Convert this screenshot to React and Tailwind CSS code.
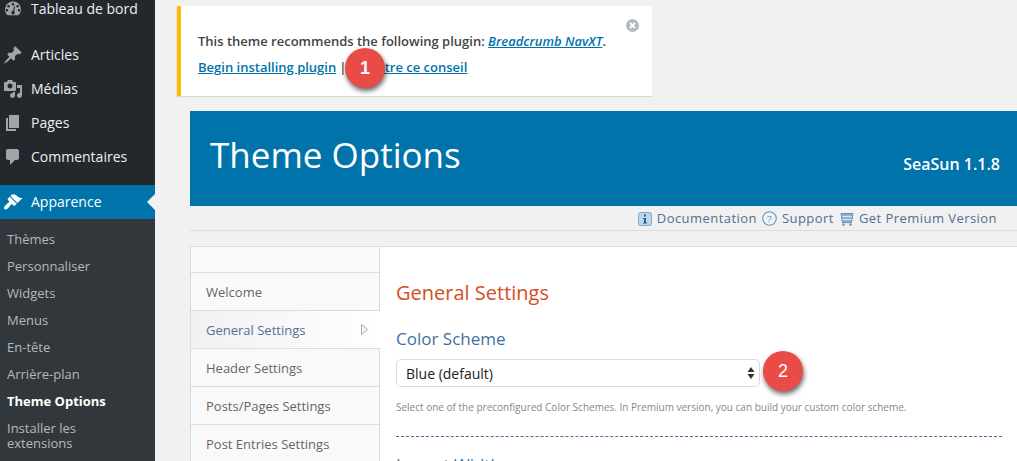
const font = { fontFamily: '"Open Sans", sans-serif' };

const Dash = () => (
  <svg viewBox="0 0 20 20" className="w-5 h-5" fill="#a0a5aa">
    <path fillRule="evenodd" d="M10 2.500a8 8 0 0 0-8 8c0 2 .8 3.900 2 5.300.3.300.7.500 1.100.500h9.800c.4 0 .8-.2 1.100-.5a8 8 0 0 0 2-5.300 8 8 0 0 0-8-8zM10 4a1.300 1.300 0 1 1 0 2.600A1.300 1.300 0 0 1 10 4zM5.500 6a1.300 1.300 0 1 1 0 2.600 1.300 1.300 0 0 1 0-2.600zm9 0a1.300 1.300 0 1 1 0 2.600 1.300 1.300 0 0 1 0-2.600zM4 10a1.300 1.300 0 1 1 0 2.600A1.300 1.300 0 0 1 4 10zm12 0a1.300 1.300 0 1 1 0 2.600 1.300 1.300 0 0 1 0-2.600zM11.500 7l.6.2-1 5a1.700 1.700 0 1 1-1.300-.3z" />
  </svg>
);
const Pin = () => (
  <svg viewBox="0 0 20 20" className="w-5 h-5" fill="#a0a5aa">
    <path d="M10.440 3.020l1.820-1.820 6.360 6.350-1.830 1.820c-1.050-.68-2.480-.57-3.410.36l-.75.750c-.92.930-1.040 2.350-.35 3.410l-1.830 1.820-2.410-2.410-2.800 2.790c-.42.420-3.380 2.710-3.800 2.290s1.860-3.390 2.280-3.810l2.790-2.790L4.100 9.360l1.830-1.820c1.050.690 2.480.570 3.400-.36l.750-.75c.930-.92 1.050-2.350.360-3.410z" />
  </svg>
);
const Media = () => (
  <svg viewBox="0 0 20 20" className="w-5 h-5" fill="#a0a5aa">
    <path fillRule="evenodd" d="M13 11V4c0-.55-.45-1-1-1h-1.670L9 1H5L3.670 3H2c-.55 0-1 .45-1 1v7c0 .55.45 1 1 1h10c.55 0 1-.45 1-1zM7 4.500c1.380 0 2.500 1.120 2.500 2.500S8.380 9.500 7 9.500 4.500 8.380 4.500 7 5.620 4.500 7 4.500zM14 6h5v10.500c0 1.380-1.120 2.500-2.500 2.500S14 17.880 14 16.500s1.120-2.500 2.500-2.500c.17 0 .34.020.5.050V9h-3V6zm-4 8.050V13h2v3.500c0 1.380-1.120 2.500-2.500 2.500S7 17.880 7 16.500 8.120 14 9.500 14c.17 0 .34.020.5.050z" />
  </svg>
);
const Pages = () => (
  <svg viewBox="0 0 20 20" className="w-5 h-5" fill="#a0a5aa">
    <path d="M6 15V2h10v13H6zm-1 1h8v2H3V5h2v11z" />
  </svg>
);
const Comment = () => (
  <svg viewBox="0 0 20 20" className="w-5 h-5" fill="#a0a5aa">
    <path d="M5 2h9c1.100 0 2 .9 2 2v7c0 1.100-.9 2-2 2h-2l-5 5v-5H5c-1.100 0-2-.9-2-2V4c0-1.100.9-2 2-2z" />
  </svg>
);
const Brush = () => (
  <svg viewBox="0 0 20 20" className="w-5 h-5" fill="#fff">
    <path d="M14.480 11.060L7.410 3.990l1.500-1.500c.5-.56 2.300-.47 3.510.32 1.210.8 1.430 1.280 2.910 2.100 1.180.64 2.450 1.260 4.450.85zm-.71.71L6.700 4.700 4.930 6.470c-.39.390-.39 1.020 0 1.410l1.060 1.060c.39.390.39 1.030 0 1.420-.6.6-1.430 1.110-2.210 1.690-.35.260-.7.530-1.010.84C1.430 14.230.4 16.080 1.400 17.070c.99 1 2.840-.03 4.180-1.360.31-.31.58-.66.85-1.020.57-.78 1.080-1.610 1.690-2.210.39-.39 1.020-.39 1.410 0l1.060 1.060c.39.390 1.020.390 1.410 0z" />
  </svg>
);

function NavItem({ icon, label, active }) {
  return (
    <div className={`relative h-[34px] flex items-center pl-[3px] ${active ? "bg-[#0073aa] text-white" : "text-[#eeeeee]"}`}>
      <div className="w-[28px] flex justify-start shrink-0">{icon}</div>
      <span className="text-[14px] leading-[18px] font-medium">{label}</span>
      {active && (
        <div className="absolute right-0 top-[9px] w-0 h-0 border-y-[8px] border-y-transparent border-r-[8px] border-r-[#f1f1f1]" />
      )}
    </div>
  );
}

function SubItem({ label, active }) {
  return (
    <div className={`pl-[7px] pr-2 py-[4px] text-[13px] leading-[19px] ${active ? "text-white font-bold" : "text-[#b4b9be] font-medium"}`}>
      {label}
    </div>
  );
}

function Sidebar() {
  return (
    <div className="w-[155px] shrink-0 bg-[#23282d] -mt-[8px] flex flex-col">
      <NavItem icon={<Dash />} label="Tableau de bord" />
      <div className="h-[12px]" />
      <NavItem icon={<Pin />} label="Articles" />
      <NavItem icon={<Media />} label="Médias" />
      <NavItem icon={<Pages />} label="Pages" />
      <NavItem icon={<Comment />} label="Commentaires" />
      <div className="h-[11px]" />
      <NavItem icon={<Brush />} label="Apparence" active />
      <div className="bg-[#32373c] flex-1 pt-[7px]">
        <SubItem label="Thèmes" />
        <SubItem label="Personnaliser" />
        <SubItem label="Widgets" />
        <SubItem label="Menus" />
        <SubItem label="En-tête" />
        <SubItem label="Arrière-plan" />
        <SubItem label="Theme Options" active />
        <div className="pl-[7px] pr-[40px] pt-[6px] text-[13px] leading-[15px] text-[#b4b9be] font-medium">
          Installer les extensions
        </div>
      </div>
    </div>
  );
}

function Badge({ n, className }) {
  return (
    <div
      className={`absolute w-[40px] h-[40px] rounded-full bg-[#e94b47] text-white flex items-center justify-center text-[18px] shadow-[1px_3px_5px_rgba(0,0,0,0.6)] ${className}`}
      style={{ fontFamily: '"Liberation Sans", sans-serif' }}
    >
      {n}
    </div>
  );
}

function Notice() {
  return (
    <div className="relative shrink-0 ml-[22px] w-[475px] h-[90px] bg-white border-l-[4px] border-[#ffb900] shadow-[0_1px_1px_rgba(0,0,0,0.1)] pl-[17px] pt-[26px] text-[13px] font-semibold text-[#444444] leading-[19px]">
      <p>
        This theme recommends the following plugin:{" "}
        <a className="text-[#0073aa] underline italic">Breadcrumb NavXT</a>.
      </p>
      <p className="mt-[7px]">
        <a className="text-[#0073aa] underline">Begin installing plugin</a>
        <span className="mx-[3px]">|</span>
        <a className="text-[#0073aa] underline">Omettre ce conseil</a>
      </p>
      <svg viewBox="0 0 14 14" className="absolute top-[13px] right-[13px] w-[13px] h-[13px]">
        <circle cx="7" cy="7" r="7" fill="#b4b9be" />
        <path d="M4.300 4.300l5.400 5.400M9.700 4.300l-5.400 5.400" stroke="#fff" strokeWidth="2" />
      </svg>
      <Badge n="1" className="left-[164px] top-[42px]" />
    </div>
  );
}

function LinkBar() {
  return (
    <div className="h-[25px] shrink-0 bg-[#f1f1f1] border-b border-[#dcdcdc] flex items-center justify-end pr-[20px] pt-[2px] text-[13px] text-[#4f6f95] tracking-[0.45px]">
      <svg viewBox="0 0 14 14" className="w-[14px] h-[14px] mr-[5px]">
        <rect x="0.500" y="0.500" width="13" height="13" rx="2" fill="#bcd6ea" stroke="#7fa9cb" />
        <rect x="6" y="2.500" width="2" height="2" fill="#2f5f8f" />
        <path d="M5 6h3v4.500h1v1H5v-1h1V7H5z" fill="#2f5f8f" />
      </svg>
      <span>Documentation</span>
      <svg viewBox="0 0 14 14" className="w-[15px] h-[15px] ml-[5px] mr-[5px] -mt-[1px]">
        <circle cx="7" cy="7" r="6.300" fill="#eef5fa" stroke="#5f93bd" />
        <text x="7" y="10.300" fontSize="9" textAnchor="middle" fill="#5f93bd" fontFamily="Liberation Sans">?</text>
      </svg>
      <span>Support</span>
      <svg viewBox="0 0 14 14" className="w-[14px] h-[14px] ml-[6px] mr-[5px]">
        <path d="M1 1.500h12l-1.500 9h-9z" fill="#8fb3cf" stroke="#5f93bd" />
        <path d="M2 4.500h10M2.500 7.500h9" stroke="#dbe8f2" />
        <circle cx="3.500" cy="12.500" r="1.200" fill="#5f93bd" />
        <circle cx="10.500" cy="12.500" r="1.200" fill="#5f93bd" />
      </svg>
      <span>Get Premium Version</span>
    </div>
  );
}

function Tab({ label, active }) {
  return (
    <div
      className={`relative h-[38px] shrink-0 flex items-center pl-[15px] pt-[2px] text-[13px] border-b border-[#dcdcdc] ${
        active
          ? "bg-gradient-to-r from-[#f1f1f1] to-white text-[#4f7299] -mr-[1px]"
          : "bg-[#f9f9f9] text-[#666666]"
      }`}
    >
      {label}
      {active && (
        <svg viewBox="0 0 7 11" className="absolute left-[170px] top-[13px] w-[7px] h-[11px]">
          <path d="M.5.500l6 5-6 5z" fill="#f4f4f4" stroke="#aaaaaa" />
        </svg>
      )}
    </div>
  );
}

function Card() {
  return (
    <div className="relative mt-[15px] flex h-[300px] shrink-0 bg-white border-l border-t border-[#dcdcdc]">
      <div className="w-[189px] shrink-0 border-r border-[#dcdcdc] bg-[#f9f9f9] flex flex-col">
        <div className="h-[26px] shrink-0 border-b border-[#dcdcdc]" />
        <Tab label="Welcome" />
        <Tab label="General Settings" active />
        <Tab label="Header Settings" />
        <Tab label="Posts/Pages Settings" />
        <Tab label="Post Entries Settings" />
      </div>
      <div className="flex-1 pl-[16px] pr-[15px] pt-[32px]">
        <h2 className="text-[20px] leading-[27px] text-[#d54e21]">General Settings</h2>
        <h3 className="text-[17px] leading-[24px] text-[#41709c] mt-[21px]">Color Scheme</h3>
        <div className="relative w-[364px] h-[28px] mt-[8px] border border-[#dcdcdc] rounded-[5px] bg-white flex items-center pl-[9px] text-[14px] text-[#222222]">
          Blue (default)
          <svg viewBox="0 0 8 12" className="absolute right-[4px] top-[7px] w-[8px] h-[12px]" fill="#333333">
            <path d="M4 0l3.500 5h-7zM4 12L.5 7h7z" />
          </svg>
          <Badge n="2" className="left-[366px] -top-[9px]" />
        </div>
        <p className="text-[10px] leading-[14px] text-[#888888] mt-[13px]">
          Select one of the preconfigured Color Schemes. In Premium version, you can build your custom color scheme.
        </p>
        <div className="border-t border-dashed border-[#41709c] mt-[22px] w-[606px]" />
        <h3 className="text-[17px] leading-[24px] text-[#41709c] mt-[16px]">Layout Width</h3>
      </div>
    </div>
  );
}

export default function App() {
  return (
    <div className="relative flex h-[461px] w-[1017px] overflow-hidden bg-[#f1f1f1]" style={font}>
      <Sidebar />
      <div className="flex-1 min-w-0 flex flex-col pt-[6px]">
        <Notice />
        <div className="ml-[35px] mt-[15px] flex flex-col">
          <div className="h-[95px] shrink-0 bg-[#0073aa] flex justify-between text-white pl-[20px] pr-[17px]">
            <h1 className="text-[35px] leading-[48px] pt-[20px]">Theme Options</h1>
            <span className="text-[16px] font-semibold pt-[41px]">SeaSun 1.1.8</span>
          </div>
          <LinkBar />
          <Card />
        </div>
      </div>
    </div>
  );
}
